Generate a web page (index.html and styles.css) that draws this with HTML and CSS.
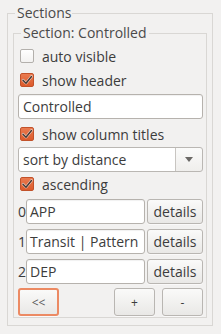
FILE: index.html
```html
<!DOCTYPE html>
<html>
<head>
<meta charset="utf-8">
<link rel="stylesheet" href="styles.css">
</head>
<body>
<fieldset class="outer">
  <legend class="legend-outer">Sections</legend>
  <fieldset class="inner">
    <legend class="legend-inner">Section: Controlled</legend>
    <div class="check-row first"><span class="box"></span><span>auto visible</span></div>
    <div class="check-row"><span class="box checked"><svg viewBox="0 0 14 14" width="14" height="14"><path d="M3 7.2 L6 10.2 L11.5 3.5" fill="none" stroke="#fbe3d8" stroke-width="2.6" stroke-linecap="round" stroke-linejoin="round"/><path d="M3 7.2 L6 10.2 L11.5 3.5" fill="none" stroke="#4a3a34" stroke-width="1.6" stroke-linecap="round" stroke-linejoin="round"/></svg></span><span>show header</span></div>
    <div class="entry wide">Controlled</div>
    <div class="check-row r3"><span class="box checked"><svg viewBox="0 0 14 14" width="14" height="14"><path d="M3 7.2 L6 10.2 L11.5 3.5" fill="none" stroke="#fbe3d8" stroke-width="2.6" stroke-linecap="round" stroke-linejoin="round"/><path d="M3 7.2 L6 10.2 L11.5 3.5" fill="none" stroke="#4a3a34" stroke-width="1.6" stroke-linecap="round" stroke-linejoin="round"/></svg></span><span>show column titles</span></div>
    <div class="combo"><span class="combo-text">sort by distance</span><span class="combo-btn"><svg width="8" height="5" viewBox="0 0 8 5"><path d="M0 0 H8 L4 5 Z" fill="#6b6966"/></svg></span></div>
    <div class="check-row"><span class="box checked"><svg viewBox="0 0 14 14" width="14" height="14"><path d="M3 7.2 L6 10.2 L11.5 3.5" fill="none" stroke="#fbe3d8" stroke-width="2.6" stroke-linecap="round" stroke-linejoin="round"/><path d="M3 7.2 L6 10.2 L11.5 3.5" fill="none" stroke="#4a3a34" stroke-width="1.6" stroke-linecap="round" stroke-linejoin="round"/></svg></span><span>ascending</span></div>
    <div class="list">
      <div class="item"><span class="idx">0</span><div class="entry">APP</div><div class="btn details">details</div></div>
      <div class="item"><span class="idx">1</span><div class="entry">Transit | Pattern</div><div class="btn details">details</div></div>
      <div class="item"><span class="idx">2</span><div class="entry">DEP</div><div class="btn details">details</div></div>
    </div>
    <div class="bottom">
      <div class="btn small focus">&lt;&lt;</div>
      <div class="spacer"></div>
      <div class="btn small">+</div>
      <div class="btn small">-</div>
    </div>
  </fieldset>
</fieldset>
</body>
</html>
```
FILE: styles.css
```css
html, body {
  margin: 0;
  padding: 0;
  background: #f2f1f0;
}
body {
  font-family: "Open Sans", "Noto Sans", sans-serif;
  font-size: 14px;
  color: #3c3c3c;
  width: 221px;
  height: 334px;
  overflow: hidden;
}
fieldset {
  margin: 0;
  min-width: 0;
}
.outer {
  margin: 3px 8px 0 7px;
  border: 1px solid #d9d7d4;
  padding: 0 5px 6px 5px;
  height: 323px;
  box-sizing: border-box;
}
.legend-outer {
  padding: 0 1px 0 2px;
  margin-left: 2px;
  line-height: 20px;
  height: 20px;
  color: #4a4a4a;
}
.inner {
  border: 1px solid #d9d7d4;
  padding: 0 3px 1px 4px;
  display: flex;
  flex-direction: column;
}
.legend-inner {
  padding: 0 2px;
  margin-left: 3px;
  line-height: 20px;
  height: 20px;
  color: #4a4a4a;
}
.check-row {
  display: flex;
  align-items: center;
  height: 24px;
  gap: 8px;
  padding-left: 2px;
}
.first { margin-top: 1px; }
.r3 { margin-top: 3px; }
.box {
  width: 12px;
  height: 12px;
  border: 1px solid #b3b0ac;
  border-radius: 2px;
  background: linear-gradient(#ffffff, #f3f2f1);
  display: inline-flex;
  align-items: center;
  justify-content: center;
  flex: none;
}
.box.checked {
  border-color: #c2522a;
  background: linear-gradient(#ea7b50, #dc5a2b);
}
.box svg { display: block; margin: -1px; }
.entry {
  background: #fff;
  border: 1px solid #b6b2ad;
  border-radius: 3px;
  height: 23px;
  line-height: 23px;
  padding: 0 4px;
  white-space: nowrap;
  overflow: hidden;
  box-shadow: inset 0 1px 1px rgba(0,0,0,0.06);
}
.wide { margin-top: 2px; }
.combo {
  margin-top: 1px;
  display: flex;
  height: 23px;
  border: 1px solid #bab7b3;
  border-radius: 3px;
  background: linear-gradient(#fbfbfa, #efeeec);
}
.combo-text {
  flex: 1;
  line-height: 23px;
  padding-left: 4px;
  background: #fff;
  border-radius: 3px 0 0 3px;
  border-right: 1px solid #c8c5c1;
}
.combo-btn {
  width: 26px;
  display: flex;
  align-items: center;
  justify-content: center;
}
.list {
  margin-top: 3px;
  display: flex;
  flex-direction: column;
  gap: 5px;
}
.item {
  display: flex;
  align-items: center;
  height: 25px;
}
.idx {
  width: 8px;
  flex: none;
}
.item .entry {
  flex: 1;
  padding-left: 3px;
}
.btn {
  border: 1px solid #b9b6b2;
  border-radius: 3px;
  background: linear-gradient(#fafaf9, #e9e8e6);
  display: flex;
  align-items: center;
  justify-content: center;
  box-sizing: border-box;
  box-shadow: 0 1px 0 rgba(255,255,255,0.6);
}
.details {
  width: 56px;
  height: 25px;
  margin-left: 2px;
}
.bottom {
  margin-top: 4px;
  display: flex;
  height: 28px;
  gap: 7px;
}
.spacer { flex: 1; }
.small {
  width: 41px;
  height: 28px;
  font-size: 12px;
}
.focus {
  border: 2px solid #ec8a63;
  color: #5a5a5a;
}
```
